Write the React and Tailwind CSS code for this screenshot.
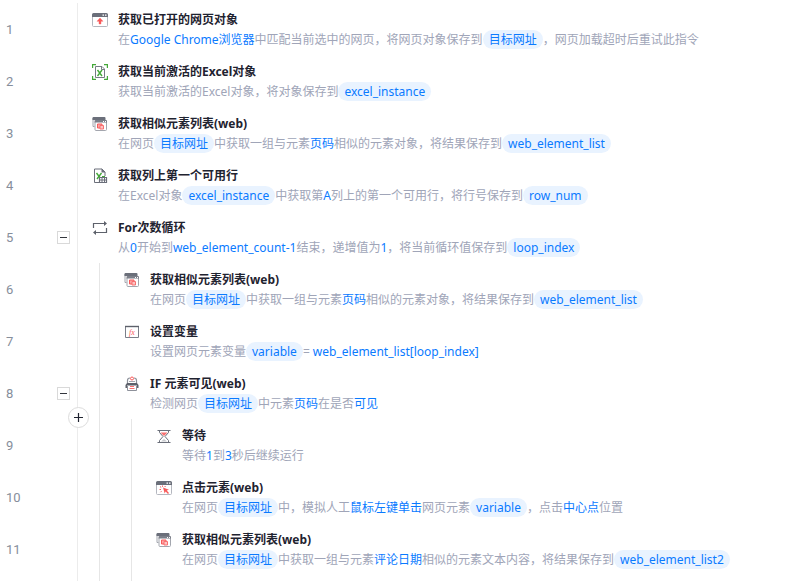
import React, { useState } from "react";

const WindowFrame = () => (
  <>
    <path d="M.5 4v9.500a1 1 0 0 0 1 1h13a1 1 0 0 0 1-1V4" fill="none" stroke="#b4b7bf" />
    <path d="M0 5V2.500A1.500 1.500 0 0 1 1.500 1h13A1.500 1.500 0 0 1 16 2.500V5z" fill="#6b6f7a" />
    <path d="M10.500 2.500h1.500v1.200h-1.500zM13 2.500h1.500v1.200H13z" fill="#fff" />
  </>
);

const icons = {
  page: (
    <>
      <WindowFrame />
      <path d="M8 6l3 3.300H9V12H7V9.300H5z" fill="#f85a5a" stroke="#f85a5a" strokeWidth=".4" />
    </>
  ),
  excel: (
    <>
      <path d="M.6 4V.6H4M12 .6h3.400V4M.6 12v3.400H4M12 15.400h3.400V12" fill="none" stroke="#43a838" strokeWidth="1.200" />
      <path d="M3.500 2.500h6.500l2.500 2.500v8.500h-9z" fill="none" stroke="#777b85" />
      <path d="M9.500 2.500V5.500h3" fill="none" stroke="#777b85" />
      <path d="M5.500 6l4.500 6M10 6l-4.500 6" stroke="#43a838" strokeWidth="1.400" />
    </>
  ),
  similar: (
    <>
      <path d="M1 2v8.500h2" fill="none" stroke="#a3a6ae" />
      <path d="M.5 2a1 1 0 0 1 1-1h11a1 1 0 0 1 1 1v2H.5z" fill="#6b6f7a" />
      <rect x="2.500" y="4" width="12.500" height="11" rx="1" fill="#fff" />
      <path d="M3 6v7.500a1 1 0 0 0 1 1h9.500a1 1 0 0 0 1-1V6" fill="none" stroke="#a3a6ae" />
      <path d="M2.500 6.500V5a1 1 0 0 1 1-1H14a1 1 0 0 1 1 1v1.500z" fill="#7b7f89" />
      <path d="M11 5h1v1h-1zM13 5h1v1h-1z" fill="#fff" />
      <path d="M5.500 8H10v4H5.500z" fill="#fba4a4" stroke="#f85a5a" />
      <path d="M8 9.500h3.500V13H8z" fill="#fcc4c4" stroke="#f87070" />
    </>
  ),
  row: (
    <>
      <path d="M7 14.500H2.500V1h7.500l3 3v4" fill="none" stroke="#6b6f7a" />
      <path d="M9.500 .5v4h4z" fill="#6b6f7a" />
      <path d="M4.500 5l4.500 6M9.500 5L5 11" stroke="#43a838" strokeWidth="1.400" />
      <path d="M7.500 9.500h7v5h-7z" fill="#fff" stroke="#6b6f7a" strokeWidth="1.200" />
      <path d="M7 12h8M10 9v6M12.500 9v6" stroke="#6b6f7a" />
      <path d="M10 8.500h3" stroke="#43a838" />
    </>
  ),
  loop: (
    <>
      <path d="M1.500 8V3.500H13M14.500 8v4.500H3" fill="none" stroke="#5d616b" strokeWidth="1.200" />
      <path d="M12 1l3 2.500-3 2.500zM4 10l-3 2.500L4 15z" fill="#5d616b" />
    </>
  ),
  variable: (
    <>
      <path d="M1.500 2.500h13v11h-13z" fill="none" stroke="#7b7f89" />
      <path d="M1 2.500h14" stroke="#5d616b" strokeWidth="1.400" />
      <text x="8" y="11" textAnchor="middle" fontSize="8" fontStyle="italic" fontFamily="Liberation Serif, serif" fill="#f85a5a">
        fx
      </text>
    </>
  ),
  visible: (
    <>
      <path d="M3.500 7V4.500a2.500 2.500 0 0 1 2.500-2.500M10 2a2.500 2.500 0 0 1 2.500 2.500V7" fill="none" stroke="#8d919a" strokeWidth="1.200" />
      <circle cx="8" cy="2.500" r="1.500" fill="none" stroke="#f85a5a" />
      <path d="M5 5.500h6" stroke="#a3a6ae" />
      <path d="M3 7h10l1.500 2v3H13V9.500H3V12H1.500V9z" fill="#5d616b" />
      <path d="M3.500 10v4.500h9V10" fill="none" stroke="#8d919a" />
      <path d="M6 10.500h4M5.500 12.500h5" stroke="#f87070" />
    </>
  ),
  wait: (
    <>
      <path d="M1.500 2.500h13M1.500 14.500h13" stroke="#6b6f7a" strokeWidth="1.200" />
      <path d="M3.500 3v1.500L7 8.500l-3.500 4V14M12.500 3v1.500L9 8.500l3.500 4V14" fill="none" stroke="#6b6f7a" />
      <path d="M4.500 4.500h7L8 8z" fill="#f87070" />
      <path d="M5 13.500L8 11l3 2.500z" fill="#c9cbd0" />
    </>
  ),
  click: (
    <>
      <WindowFrame />
      <path d="M7 7.500l6 2.200-2.300.8 2.300 2.500-1 1-2.400-2.500-.9 2z" fill="#f85a5a" />
      <path d="M6.500 5.500v1.300M4 6.500l1.200 1M3.500 9.500h1.500M4.500 12.200l1-1M9.500 6l-.8 1" stroke="#f85a5a" />
    </>
  ),
};

// t: văn bản thường, b: tham số màu xanh, v: tên biến trong nhãn
const steps = [
  {
    icon: "page",
    depth: 0,
    title: "获取已打开的网页对象",
    desc: [
      { t: "在" },
      { b: "Google Chrome浏览器" },
      { t: "中匹配当前选中的网页，将网页对象保存到" },
      { v: "目标网址" },
      { t: "，网页加载超时后重试此指令" },
    ],
  },
  {
    icon: "excel",
    depth: 0,
    title: "获取当前激活的Excel对象",
    desc: [{ t: "获取当前激活的Excel对象，将对象保存到" }, { v: "excel_instance" }],
  },
  {
    icon: "similar",
    depth: 0,
    title: "获取相似元素列表(web)",
    desc: [
      { t: "在网页" },
      { v: "目标网址" },
      { t: "中获取一组与元素" },
      { b: "页码" },
      { t: "相似的元素对象，将结果保存到" },
      { v: "web_element_list" },
    ],
  },
  {
    icon: "row",
    depth: 0,
    title: "获取列上第一个可用行",
    desc: [
      { t: "在Excel对象" },
      { v: "excel_instance" },
      { t: "中获取第" },
      { b: "A" },
      { t: "列上的第一个可用行，将行号保存到" },
      { v: "row_num" },
    ],
  },
  {
    icon: "loop",
    depth: 0,
    block: true,
    title: "For次数循环",
    desc: [
      { t: "从" },
      { b: "0" },
      { t: "开始到" },
      { b: "web_element_count-1" },
      { t: "结束，递增值为" },
      { b: "1" },
      { t: "，将当前循环值保存到" },
      { v: "loop_index" },
    ],
  },
  {
    icon: "similar",
    depth: 1,
    title: "获取相似元素列表(web)",
    desc: [
      { t: "在网页" },
      { v: "目标网址" },
      { t: "中获取一组与元素" },
      { b: "页码" },
      { t: "相似的元素对象，将结果保存到" },
      { v: "web_element_list" },
    ],
  },
  {
    icon: "variable",
    depth: 1,
    title: "设置变量",
    desc: [
      { t: "设置网页元素变量" },
      { v: "variable" },
      { t: "= " },
      { b: "web_element_list[loop_index]" },
    ],
  },
  {
    icon: "visible",
    depth: 1,
    block: true,
    insert: true,
    title: "IF 元素可见(web)",
    desc: [
      { t: "检测网页" },
      { v: "目标网址" },
      { t: "中元素" },
      { b: "页码" },
      { t: "在是否" },
      { b: "可见" },
    ],
  },
  {
    icon: "wait",
    depth: 2,
    title: "等待",
    desc: [{ t: "等待" }, { b: "1" }, { t: "到" }, { b: "3" }, { t: "秒后继续运行" }],
  },
  {
    icon: "click",
    depth: 2,
    title: "点击元素(web)",
    desc: [
      { t: "在网页" },
      { v: "目标网址" },
      { t: "中，模拟人工" },
      { b: "鼠标左键单击" },
      { t: "网页元素" },
      { v: "variable" },
      { t: "，点击" },
      { b: "中心点" },
      { t: "位置" },
    ],
  },
  {
    icon: "similar",
    depth: 2,
    title: "获取相似元素列表(web)",
    desc: [
      { t: "在网页" },
      { v: "目标网址" },
      { t: "中获取一组与元素" },
      { b: "评论日期" },
      { t: "相似的元素文本内容，将结果保存到" },
      { v: "web_element_list2" },
    ],
  },
];

const Part = ({ part }) => {
  if (part.v) {
    return (
      <span className="inline-block rounded-full bg-[#e9f3ff] px-1.5 leading-[19px] text-[#0a7aff]">
        {part.v}
      </span>
    );
  }
  if (part.b) return <span className="text-[#0a7aff]">{part.b}</span>;
  return <span>{part.t}</span>;
};

const Guides = ({ depth }) =>
  Array.from({ length: depth }).map((_, i) => (
    <div key={i} className="ml-[7px] w-[25px] shrink-0 border-l border-[#e6e6e6]" />
  ));

const Step = ({ step, number, collapsed, onToggle }) => (
  <li className="flex h-[52px] shrink-0">
    <div className="flex w-[77px] shrink-0 items-center justify-between pl-1.5 pr-[7px]">
      <span className="pt-0.5 font-['Roboto',sans-serif] text-[13px] text-[#868e9b]">{number}</span>
      {step.block && (
        <button
          onClick={onToggle}
          aria-expanded={!collapsed}
          aria-label={step.title}
          className="flex size-[13px] items-center justify-center border border-[#d9d9d9] bg-white"
        >
          <svg viewBox="0 0 7 7" className="size-[7px]" stroke="#33363d">
            <path d={collapsed ? "M0 3.500h7M3.500 0v7" : "M0 3.500h7"} />
          </svg>
        </button>
      )}
    </div>

    <div className="relative flex min-w-0 flex-1 border-l border-[#ececec] pl-3.5">
      <Guides depth={step.depth} />
      <svg viewBox="0 0 16 16" className="mt-[9px] size-4 shrink-0">
        {icons[step.icon]}
      </svg>
      <div className="ml-2.5 whitespace-nowrap pt-[7px] text-xs">
        <h3 className="font-bold leading-5 text-[#1f2330]">{step.title}</h3>
        <p className="leading-5 text-[#a0a5b8]">
          {step.desc.map((part, i) => (
            <Part key={i} part={part} />
          ))}
        </p>
      </div>
      {step.insert && (
        <button
          aria-label="+"
          className="absolute -bottom-[9px] -left-[10px] z-10 flex size-[21px] items-center justify-center rounded-full border border-[#dcdcdc] bg-white"
        >
          <svg viewBox="0 0 9 9" className="size-[9px]" stroke="#1f2330" strokeWidth="1.200">
            <path d="M0 4.500h9M4.500 0v9" />
          </svg>
        </button>
      )}
    </div>
  </li>
);

const App = () => {
  const [collapsed, setCollapsed] = useState([]);

  const toggle = (index) => {
    setCollapsed((prev) =>
      prev.includes(index) ? prev.filter((i) => i !== index) : [...prev, index]
    );
  };

  // Ẩn các bước nằm trong khối đã thu gọn
  const isHidden = (index) =>
    collapsed.some(
      (c) =>
        c < index &&
        steps.slice(c + 1, index + 1).every((s) => s.depth > steps[c].depth)
    );

  return (
    <main className="flex min-h-screen flex-col overflow-hidden bg-white pt-[3px] font-['Noto_Sans','Noto_Sans_CJK_SC',sans-serif]">
      <ol>
        {steps.map((step, index) =>
          isHidden(index) ? null : (
            <Step
              key={index}
              step={step}
              number={index + 1}
              collapsed={collapsed.includes(index)}
              onToggle={() => toggle(index)}
            />
          )
        )}
      </ol>
      {/* Các đường kẻ kéo dài đến cuối trang */}
      <div className="ml-[77px] flex flex-1 border-l border-[#ececec] pl-3.5">
        <Guides depth={collapsed.length ? 0 : 2} />
      </div>
    </main>
  );
};

export default App;
